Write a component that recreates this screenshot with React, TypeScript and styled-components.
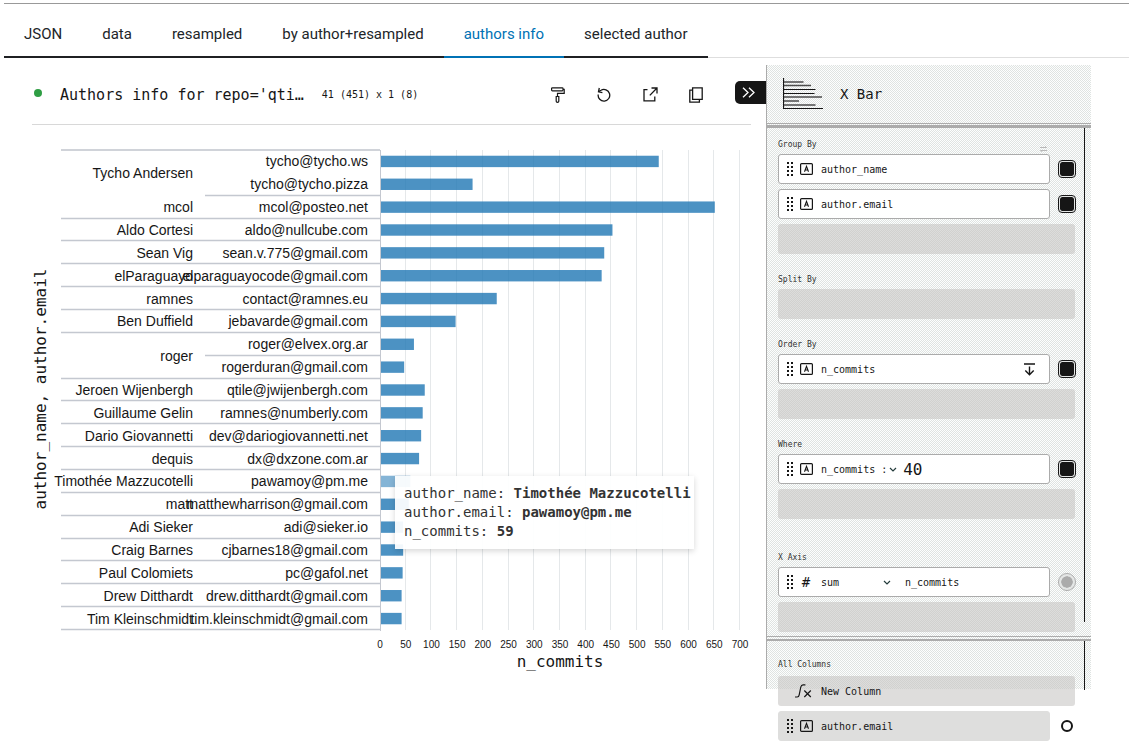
import React from "react";
import styled, { createGlobalStyle, css } from "styled-components";

const mono = `"DejaVu Sans Mono", "Liberation Mono", monospace`;
const sans = `"Liberation Sans", Arial, sans-serif`;
const ink = "#161616";
const rule = "#ababab";

const GlobalStyle = createGlobalStyle`
  *, *::before, *::after { box-sizing: border-box; }
  body { margin: 0; background: #fff; color: ${ink}; }
  button, input, select { font: inherit; color: inherit; margin: 0; padding: 0; }
  svg { display: block; flex: none; }
`;

const Page = styled.div`
  padding: 3px 4px 4px;
  font-family: ${mono};
`;

const Tabs = styled.nav`
  display: flex;
  height: 55px;
  padding-top: 7px;
  border-top: 1px solid #999;
  box-shadow: inset 0 -1px #dedede;
`;

const Tab = styled.button<{ $active?: boolean }>`
  padding: 0 20px;
  border: 0;
  border-bottom: 2px solid ${(p) => (p.$active ? "#0072b5" : "#1f2023")};
  background: none;
  color: ${(p) => (p.$active ? "#0072b5" : "#212529")};
  font: 15px Roboto, sans-serif;
  white-space: nowrap;
`;

const Main = styled.main`
  display: flex;
  align-items: flex-start;
  padding: 7px 38px 0 0;
`;

const Viewer = styled.section`
  flex: 1;
  min-width: 0;
  padding-left: 28px;
`;

const Toolbar = styled.header`
  display: flex;
  align-items: center;
  height: 60px;
  position: relative;
  margin-right: 15px;
  padding-left: 2px;
  border-bottom: 1px solid #d8d8d8;
`;

const Status = styled.span`
  width: 8px;
  height: 8px;
  margin-bottom: 4px;
  border-radius: 50%;
  background: #2f9e44;
`;

const Title = styled.h1`
  margin: 0 0 0 18px;
  font-size: 15px;
  line-height: 20px;
  font-weight: 400;
  white-space: nowrap;
`;

const Shape = styled.span`
  margin-left: 18px;
  font-size: 10px;
  white-space: nowrap;
`;

const Tools = styled.div`
  display: flex;
  gap: 22px;
  margin-left: auto;
  margin-right: 43px;
`;

const Tool = styled.button`
  display: grid;
  place-items: center;
  width: 24px;
  height: 24px;
  border: 0;
  background: none;
`;

const Collapse = styled.button`
  position: absolute;
  right: -16px;
  display: flex;
  align-items: center;
  width: 32px;
  height: 23px;
  margin-bottom: 4px;
  padding-left: 7px;
  border: 0;
  border-radius: 5px 0 0 5px;
  background: ${ink};
`;

const Plot = styled.div`
  position: relative;
  margin: 15px 15px 0 0;
`;

const Chart = styled.svg`
  width: 100%;
  height: auto;
  overflow: visible;
`;

const Tooltip = styled.div`
  position: absolute;
  left: 363px;
  top: 336px;
  padding: 8px 3px 8px 9px;
  background: rgba(255, 255, 255, 0.93);
  box-shadow: 0 2px 6px rgba(0, 0, 0, 0.16);
  color: #333;
  font-size: 14px;
  line-height: 19px;
  white-space: nowrap;
`;

const Sidebar = styled.aside`
  width: 325px;
  flex: none;
`;

const weave = css`
  border-left: 1px solid ${rule};
  background-color: #f6f8f7;
  background-image: repeating-conic-gradient(#fdfefe 0 25%, #dfe3e1 0 50%);
  background-size: 2px 2px;
`;

const Panel = styled.section`
  position: relative;
  ${weave}
`;

const PlotType = styled(Panel)`
  display: flex;
  align-items: center;
  gap: 17px;
  height: 58px;
  padding-left: 16px;
  font-size: 14px;
`;

const Divider = styled(Panel)<{ $heavy?: boolean }>`
  height: 5px;
  border-top: 1px solid ${rule};
  border-bottom: ${(p) => (p.$heavy ? 3 : 2)}px solid ${rule};
`;

const Scroller = styled(Panel)`
  padding: 6px 15px 4px 11px;
  &::after {
    content: "";
    position: absolute;
    top: 0;
    right: 6px;
    bottom: 14px;
    width: 1px;
    background: ${ink};
  }
`;

/* the list runs on below the end of the woven backdrop */
const Columns = styled.section`
  position: relative;
  isolation: isolate;
  padding: 13px 15px 0 12px;
  &::before {
    content: "";
    position: absolute;
    z-index: -1;
    inset: 0 0 auto;
    height: 48px;
    ${weave}
  }
  &::after {
    content: "";
    position: absolute;
    top: 0;
    right: 6px;
    width: 1px;
    height: 49px;
    background: ${ink};
  }
`;

const Group = styled.div<{ $apart?: boolean }>`
  display: grid;
  gap: 5px;
  margin-top: ${(p) => (p.$apart ? 28 : 15)}px;
  &:first-child { margin-top: 0; }
`;

const GroupLabel = styled.div`
  display: flex;
  justify-content: space-between;
  height: 20px;
  margin-bottom: -5px;
  padding-right: 29px;
  font-size: 8px;
  line-height: 22px;
  color: #333;
`;

const ColumnsLabel = styled(GroupLabel)`
  margin-bottom: -3px;
`;

const Swap = styled.button`
  align-self: flex-end;
  height: 10px;
  border: 0;
  background: none;
`;

const Row = styled.div`
  display: flex;
  align-items: center;
  justify-content: space-between;
`;

const Field = styled.div<{ $plain?: boolean }>`
  display: flex;
  align-items: center;
  flex: 1;
  height: 30px;
  margin-right: 8px;
  padding: 0 13px 0 8px;
  border: 1px solid ${(p) => (p.$plain ? "#dededd" : rule)};
  border-radius: 3px;
  background: ${(p) => (p.$plain ? "#dededd" : "#fff")};
  font-size: 10px;
`;

const TypeIcon = styled.span`
  display: grid;
  place-items: center;
  width: 14px;
  margin: 0 8px 0 6px;
  font-size: 14px;
`;

const Drop = styled.div`
  height: 30px;
  margin-right: 1px;
  border-radius: 3px;
  background: rgba(199, 197, 195, 0.58);
`;

const NewColumn = styled.button`
  display: flex;
  align-items: center;
  gap: 9px;
  height: 30px;
  margin-right: 1px;
  padding-left: 17px;
  border: 0;
  border-radius: 3px;
  background: rgba(199, 197, 195, 0.58);
  font-size: 10px;
`;

const SortButton = styled.button`
  margin-left: auto;
  border: 0;
  background: none;
`;

const Select = styled.select<{ $w: number }>`
  width: ${(p) => p.$w}px;
  appearance: none;
  border: 0;
  background: none;
  overflow: hidden;
`;

const Value = styled.input`
  width: 60px;
  margin-left: 6px;
  border: 0;
  background: none;
  font-size: 16px;
`;

const Gap = styled.span<{ $w: number }>`
  width: ${(p) => p.$w}px;
`;

const Check = styled.input<{ $round?: boolean }>`
  appearance: none;
  width: 18px;
  height: 18px;
  padding: ${(p) => (p.$round ? 2 : 1)}px;
  border: 1px solid ${(p) => (p.$round ? rule : ink)};
  border-radius: ${(p) => (p.$round ? "50%" : "4px")};
  background: ${(p) => (p.$round ? rule : ink)};
  background-clip: content-box;
  box-shadow: inset 0 0 0 ${(p) => (p.$round ? 2 : 1)}px #e4e6e5;
`;

const Unchecked = styled.input`
  appearance: none;
  width: 12px;
  height: 12px;
  margin: 0 3px;
  border: 2px solid ${ink};
  border-radius: 50%;
  background: #fff;
`;

type Entry = [name: string, email: string, commits: number, span?: number];

const entries: Entry[] = [
  ["Tycho Andersen", "tycho@tycho.ws", 542, 2],
  ["", "tycho@tycho.pizza", 180],
  ["mcol", "mcol@posteo.net", 651],
  ["Aldo Cortesi", "aldo@nullcube.com", 452],
  ["Sean Vig", "sean.v.775@gmail.com", 436],
  ["elParaguayo", "elparaguayocode@gmail.com", 431],
  ["ramnes", "contact@ramnes.eu", 227],
  ["Ben Duffield", "jebavarde@gmail.com", 147],
  ["roger", "roger@elvex.org.ar", 66, 2],
  ["", "rogerduran@gmail.com", 47],
  ["Jeroen Wijenbergh", "qtile@jwijenbergh.com", 87],
  ["Guillaume Gelin", "ramnes@numberly.com", 83],
  ["Dario Giovannetti", "dev@dariogiovannetti.net", 80],
  ["dequis", "dx@dxzone.com.ar", 76],
  ["Timothée Mazzucotelli", "pawamoy@pm.me", 59],
  ["matt", "matthewharrison@gmail.com", 56],
  ["Adi Sieker", "adi@sieker.io", 45],
  ["Craig Barnes", "cjbarnes18@gmail.com", 45],
  ["Paul Colomiets", "pc@gafol.net", 44],
  ["Drew Ditthardt", "drew.ditthardt@gmail.com", 42],
  ["Tim Kleinschmidt", "tim.kleinschmidt@gmail.com", 42],
];

const hovered = 14;
const top = 10;
const left = 348;
const plotH = 480;
const plotW = 360;
const step = plotH / entries.length;
const ticks = Array.from({ length: 15 }, (_, i) => i * 50);
const scale = (v: number) => (v / 700) * plotW;
/* rows whose lower rule spans only the e-mail column, or is left out */
const partial = [1, 8];
const noRule = [0];

function BarChart() {
  return (
    <Chart viewBox="0 0 719 536" role="img" aria-label="n_commits by author_name, author.email">
      {ticks.slice(1).map((t) => (
        <rect key={t} x={Math.round(left + scale(t)) - 1} y={top} width="1" height={plotH} fill="#e5e8ea" />
      ))}
      <path d={`M29 ${top}H${left}`} stroke="#d0d3d9" strokeWidth="2" />
      {entries.map((e, i) =>
        noRule.includes(i) ? null : (
          <path
            key={i}
            d={`M${partial.includes(i) ? 173 : 29} ${Math.round(top + (i + 1) * step) - 0.5}H${left}`}
            stroke="#c4c8d0"
            strokeWidth="1.3"
          />
        ),
      )}
      <path d={`M${left + 0.5} ${top}V${top + plotH + 1}`} stroke="#c4c8d0" />
      {entries.map((e, i) => {
        const mid = top + (i + 0.5) * step;
        return (
          <g key={e[1]} fontFamily={sans} fontSize="14" textAnchor="end" fill={ink}>
            <rect
              x={left + 1}
              y={mid - 5.7}
              width={scale(e[2]) - 1}
              height="11.4"
              fill="#1f77b4"
              opacity={i === hovered ? 0.55 : 0.8}
            />
            <text x="161" y={mid + 5 + (e[3] === 2 ? step / 2 : 0)}>{e[0]}</text>
            <text x="336" y={mid + 5}>{e[1]}</text>
          </g>
        );
      })}
      <g fontFamily={sans} fontSize="10" textAnchor="middle" fill={ink}>
        {ticks.map((t) => (
          <text key={t} x={left + scale(t)} y="508">{t}</text>
        ))}
      </g>
      <g fontFamily={mono} fontSize="16" textAnchor="middle" fill={ink}>
        <text x={left + plotW / 2} y="527">n_commits</text>
        <text transform="translate(14 249) rotate(-90)">author_name, author.email</text>
      </g>
    </Chart>
  );
}

const Grip = () => (
  <svg width="6" height="14" viewBox="0 0 6 14" fill={ink}>
    {[0, 4, 8, 12].map((y) => (
      <path key={y} d={`M0 ${y}h2v2h-2zM4 ${y}h2v2h-2z`} />
    ))}
  </svg>
);

const TextType = () => (
  <TypeIcon>
    <svg width="13" height="12" viewBox="0 0 13 12" fill="none" stroke={ink}>
      <rect x=".6" y=".6" width="11.8" height="10.8" rx="1" strokeWidth="1.2" />
      <path d="M4.5 8.7 6.5 3.4 8.5 8.7M5.2 7h2.6" strokeWidth="1.1" />
    </svg>
  </TypeIcon>
);

const Chevron = () => (
  <svg width="8" height="5" viewBox="0 0 8 5" fill="none" stroke="#243c3c" strokeWidth="1.2">
    <path d="M1 1 4 4 7 1" />
  </svg>
);

const ToggleBox = ({ name }: { name: string }) => <Check type="checkbox" defaultChecked aria-label={name} />;

export default function App() {
  return (
    <Page>
      <GlobalStyle />
      <Tabs>
        <Tab>JSON</Tab>
        <Tab>data</Tab>
        <Tab>resampled</Tab>
        <Tab>by author+resampled</Tab>
        <Tab $active>authors info</Tab>
        <Tab>selected author</Tab>
      </Tabs>
      <Main>
        <Viewer>
          <Toolbar>
            <Status />
            <Title>Authors info for repo='qti…</Title>
            <Shape>41 (451) x 1 (8)</Shape>
            <Tools>
              <Tool aria-label="Theme">
                <svg width="14" height="16" viewBox="0 0 14 16" fill="none" stroke={ink} strokeWidth="1.2">
                  <rect x=".6" y=".8" width="11.4" height="3" rx=".8" />
                  <path d="M12 2.3h1.2v4H6.5v3" />
                  <path d="M5.2 9.5h2.6v4.8q0 1-1.3 1t-1.3-1z" />
                </svg>
              </Tool>
              <Tool aria-label="Reset">
                <svg width="14" height="15" viewBox="0 0 14 15" fill="none" stroke={ink} strokeWidth="1.3">
                  <path d="M1.2 7.5A5.8 5.8 0 1 0 4 3.3L1.6 4.6" />
                  <path d="M2.3 1 1.5 4.8 5.4 5.6" />
                </svg>
              </Tool>
              <Tool aria-label="Export">
                <svg width="15" height="15" viewBox="0 0 15 15" fill="none" stroke={ink} strokeWidth="1.3">
                  <path d="M4.5 2.7H1v11.2h10.8V9.5M8.5 1h5.5v5.6M14 1 6.8 8.4" />
                </svg>
              </Tool>
              <Tool aria-label="Copy">
                <svg width="14" height="16" viewBox="0 0 14 16" fill="none" stroke={ink} strokeWidth="1.3">
                  <path d="M3.6.8h9.6v11.6H3.6zM3.6 3.2H.8v12h9.6v-2.8" />
                </svg>
              </Tool>
            </Tools>
            <Collapse aria-label="Close settings">
              <svg width="13" height="11" viewBox="0 0 13 11" fill="none" stroke="#fff" strokeWidth="1.3">
                <path d="m1 .7 5 4.8-5 4.8M7 .7l5 4.8-5 4.8" />
              </svg>
            </Collapse>
          </Toolbar>
          <Plot>
            <BarChart />
            <Tooltip>
              <div>author_name: <b>Timothée Mazzucotelli</b></div>
              <div>author.email: <b>pawamoy@pm.me</b></div>
              <div>n_commits: <b>59</b></div>
            </Tooltip>
          </Plot>
        </Viewer>
        <Sidebar>
          <PlotType>
            <svg width="40" height="32" viewBox="0 0 40 32" fill="none" stroke={ink}>
              <path d="M.5 0v30.5H40" strokeWidth="1.2" />
              <path d="M1 11.5h31.5M1 15.5h30.5" />
              <path d="M1 4h19.5M1 7.5h27M1 19h38M1 23h15M1 27h31.5" stroke="#4c4c4c" strokeWidth="1.4" />
            </svg>
            <span>X Bar</span>
          </PlotType>
          <Divider $heavy />
          <Scroller>
            <Group>
              <GroupLabel>
                Group By
                <Swap aria-label="Swap group and split">
                  <svg width="7" height="6" viewBox="0 0 7 6" fill="none" stroke="#aaa" strokeWidth=".8">
                    <path d="M0 1.5h6.5L5.3.3M7 4.5H.5l1.2 1.2" />
                  </svg>
                </Swap>
              </GroupLabel>
              <Row>
                <Field><Grip /><TextType />author_name</Field>
                <ToggleBox name="author_name" />
              </Row>
              <Row>
                <Field><Grip /><TextType />author.email</Field>
                <ToggleBox name="author.email" />
              </Row>
              <Drop />
            </Group>
            <Group>
              <GroupLabel>Split By</GroupLabel>
              <Drop />
            </Group>
            <Group>
              <GroupLabel>Order By</GroupLabel>
              <Row>
                <Field>
                  <Grip /><TextType />n_commits
                  <SortButton aria-label="Sort descending">
                    <svg width="13" height="13" viewBox="0 0 13 13" fill="none" stroke={ink} strokeWidth="1.4">
                      <path d="M1 1h11M6.5 3.5v8M2.3 7.5l4.2 4.2 4.2-4.2" />
                    </svg>
                  </SortButton>
                </Field>
                <ToggleBox name="order by n_commits" />
              </Row>
              <Drop />
            </Group>
            <Group>
              <GroupLabel>Where</GroupLabel>
              <Row>
                <Field>
                  <Grip /><TextType />n_commits
                  <Gap $w={6} />
                  <Select $w={8} aria-label="Operator"><option>:</option></Select>
                  <Chevron />
                  <Value aria-label="Filter value" defaultValue="40" />
                </Field>
                <ToggleBox name="filter n_commits" />
              </Row>
              <Drop />
            </Group>
            <Group $apart>
              <GroupLabel>X Axis</GroupLabel>
              <Row>
                <Field>
                  <Grip /><TypeIcon>#</TypeIcon>
                  <Select $w={62} aria-label="Aggregate"><option>sum</option></Select>
                  <Chevron />
                  <Gap $w={14} />
                  n_commits
                </Field>
                <Check $round type="checkbox" defaultChecked aria-label="x axis n_commits" />
              </Row>
              <Drop />
            </Group>
          </Scroller>
          <Divider />
          <Columns>
            <Group>
              <ColumnsLabel>All Columns</ColumnsLabel>
              <NewColumn>
                <svg width="17" height="14" viewBox="0 0 17 14" fill="none" stroke={ink} strokeWidth="1.2">
                  <path d="M0 13h2.2q1.6 0 2-2.2L5.8 3Q6.3.8 8 .8h2.4M9.3 6.5l6.5 6.5M15.8 6.5 9.3 13" />
                </svg>
                New Column
              </NewColumn>
              <Row>
                <Field $plain><Grip /><TextType />author.email</Field>
                <Unchecked type="checkbox" aria-label="author.email column" />
              </Row>
            </Group>
          </Columns>
        </Sidebar>
      </Main>
    </Page>
  );
}
